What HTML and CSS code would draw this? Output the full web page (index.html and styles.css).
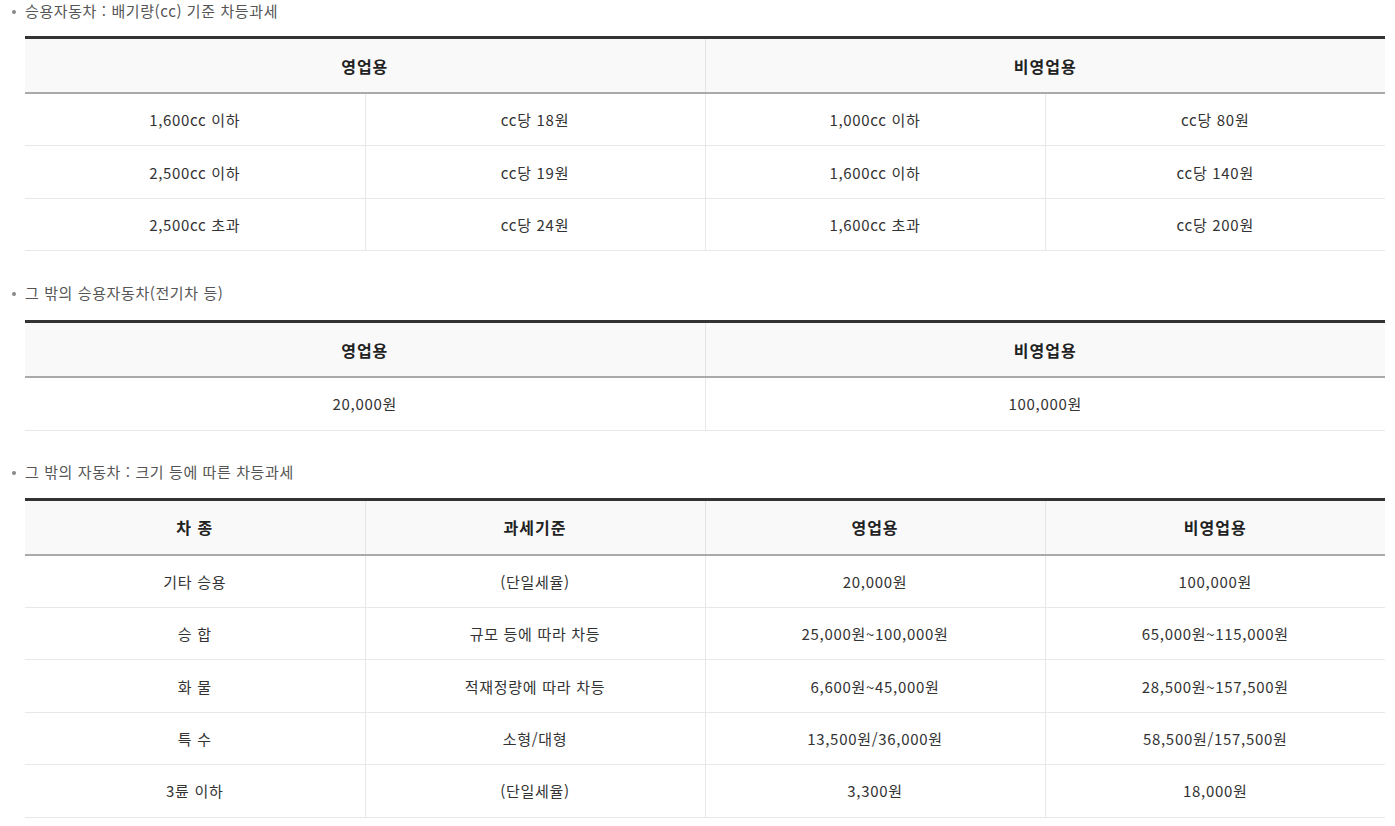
FILE: index.html
```html
<!DOCTYPE html>
<html lang="ko">
<head>
<meta charset="utf-8">
<link rel="stylesheet" href="styles.css">
</head>
<body>
<div class="page">
  <section class="sec sec-first">
    <p class="title">승용자동차 : 배기량(cc) 기준 차등과세</p>
    <table class="tbl">
      <thead>
        <tr><th colspan="2">영업용</th><th colspan="2">비영업용</th></tr>
      </thead>
      <tbody>
        <tr><td>1,600cc 이하</td><td>cc당 18원</td><td>1,000cc 이하</td><td>cc당 80원</td></tr>
        <tr><td>2,500cc 이하</td><td>cc당 19원</td><td>1,600cc 이하</td><td>cc당 140원</td></tr>
        <tr><td>2,500cc 초과</td><td>cc당 24원</td><td>1,600cc 초과</td><td>cc당 200원</td></tr>
      </tbody>
    </table>
  </section>
  <section class="sec">
    <p class="title">그 밖의 승용자동차(전기차 등)</p>
    <table class="tbl">
      <thead>
        <tr><th>영업용</th><th>비영업용</th></tr>
      </thead>
      <tbody>
        <tr><td>20,000원</td><td>100,000원</td></tr>
      </tbody>
    </table>
  </section>
  <section class="sec sec-last">
    <p class="title">그 밖의 자동차 : 크기 등에 따른 차등과세</p>
    <table class="tbl">
      <thead>
        <tr><th>차 종</th><th>과세기준</th><th>영업용</th><th>비영업용</th></tr>
      </thead>
      <tbody>
        <tr><td>기타 승용</td><td>(단일세율)</td><td>20,000원</td><td>100,000원</td></tr>
        <tr><td>승 합</td><td>규모 등에 따라 차등</td><td>25,000원~100,000원</td><td>65,000원~115,000원</td></tr>
        <tr><td>화 물</td><td>적재정량에 따라 차등</td><td>6,600원~45,000원</td><td>28,500원~157,500원</td></tr>
        <tr><td>특 수</td><td>소형/대형</td><td>13,500원/36,000원</td><td>58,500원/157,500원</td></tr>
        <tr><td>3륜 이하</td><td>(단일세율)</td><td>3,300원</td><td>18,000원</td></tr>
      </tbody>
    </table>
  </section>
</div>
</body>
</html>
```

FILE: styles.css
```css
html, body {
  margin: 0;
  padding: 0;
  background: #fff;
}
body {
  font-family: "Noto Sans CJK KR", "Noto Sans", sans-serif;
  color: #333;
}
.page {
  padding: 1px 10px 0 25px;
}
.sec {
  margin-top: 32px;
}
.sec-first {
  margin-top: 0;
}
.sec-last {
  margin-top: 31px;
}
.title {
  position: relative;
  margin: 0 0 17px;
  font-size: 15px;
  line-height: 20px;
  color: #555;
  letter-spacing: 0.6px;
}
.title::before {
  content: "";
  position: absolute;
  left: -13px;
  top: 9px;
  width: 4px;
  height: 4px;
  border-radius: 50%;
  background: #888;
}
.sec-first .title {
  margin-bottom: 15px;
}
.sec-last .title {
  margin-bottom: 16px;
}
.tbl {
  width: 100%;
  border-collapse: collapse;
  table-layout: fixed;
  border-top: 3px solid #333;
}
.tbl th {
  height: 53px;
  padding: 0;
  background: #f9f9f9;
  font-size: 16px;
  font-weight: 700;
  color: #222;
  letter-spacing: 1px;
  border-bottom: 2px solid #aaa;
  border-left: 1px solid #e5e5e5;
  text-align: center;
  vertical-align: middle;
}
.tbl td {
  height: 51.4px;
  padding: 0;
  font-size: 15px;
  color: #333;
  text-align: center;
  vertical-align: middle;
  border-bottom: 1px solid #e8e8e8;
  border-left: 1px solid #e8e8e8;
  letter-spacing: 0.7px;
}
.tbl th:first-child,
.tbl td:first-child {
  border-left: none;
}
```
